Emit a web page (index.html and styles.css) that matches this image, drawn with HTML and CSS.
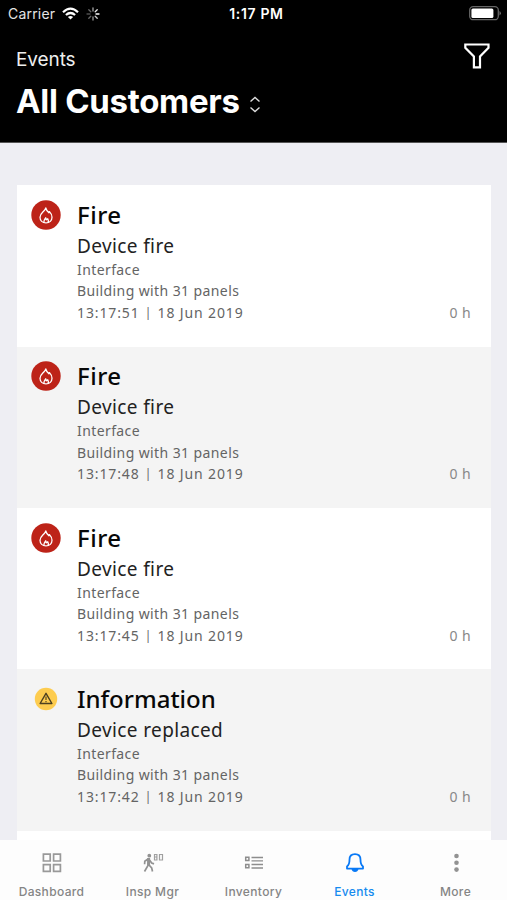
FILE: index.html
```
<!DOCTYPE html>
<html lang="en">
<head>
<meta charset="utf-8">
<title>Events</title>
<link rel="stylesheet" href="styles.css">
</head>
<body>
<svg width="0" height="0" class="defs">
  <symbol id="flame" viewBox="0 0 30 30">
    <circle cx="15" cy="15" r="14.7" fill="#bd2318"/>
    <path d="M14.800 8c.6 2.400 1.800 3.700 3.100 4.800l.6-1.200c1.700 1.800 2.500 3.700 2.500 5.600 0 3.200-2.400 5.700-6 5.700s-6-2.500-6-5.700c0-2.300 1.300-3.700 2.800-5.200C13 10.800 14.400 9.700 14.800 8zM13.200 22.500c-.8-1.700.2-3 1.500-4.700l.6 2 1.500-1c.8 1.300.8 2.500.1 3.700" fill="none" stroke="#fff" stroke-width="1.300" stroke-linejoin="round"/>
  </symbol>
</svg>
<header class="header">
  <div class="status">
    <div class="status-left">
      <span class="carrier">Carrier</span>
      <svg class="wifi" width="17" height="13" viewBox="0 0 17 13"><g fill="none" stroke="#fff" stroke-width="2.200"><path d="M1 5.200Q8.500-1.800 16 5.200"/><path d="M3.900 8Q8.500 4 13.100 8"/></g><path d="M5.900 9.900Q8.500 7.900 11.100 9.900L8.500 12.500z" fill="#fff"/></svg>
      <svg class="spinner" width="14" height="14" viewBox="0 0 14 14"><g stroke="#fff" stroke-width="1.300" stroke-linecap="round"><path d="M7 1v3" opacity=".65"/><path d="M11.200 2.800 9.200 4.800" opacity=".9"/><path d="M13 7h-3"/><path d="M11.200 11.200 9.200 9.200" opacity=".8"/><path d="M7 13v-3" opacity=".6"/><path d="M2.800 11.200 4.800 9.200" opacity=".4"/><path d="M1 7h3" opacity=".3"/><path d="M2.800 2.800 4.800 4.800" opacity=".4"/></g></svg>
    </div>
    <span class="clock">1:17 PM</span>
    <svg class="battery" width="32" height="15" viewBox="0 0 32 15"><rect x=".7" y=".7" width="28.600" height="13" rx="3.500" fill="none" stroke="#666" stroke-width="1.300"/><rect x="2.400" y="2.400" width="22" height="9.600" rx="1.500" fill="#fff"/><path d="M30.500 5v4.500q1.300-.8 1.300-2.250T30.500 5z" fill="#777"/></svg>
  </div>
  <div class="heading">
    <div>
      <div class="section">Events</div>
      <div class="customer">
        <h1>All Customers</h1>
        <svg width="12" height="17" viewBox="0 0 12 17"><path d="M1.500 5.500 6 1.500l4.500 4M1.500 11.500l4.500 4 4.500-4" fill="none" stroke="#ddd" stroke-width="1.400"/></svg>
      </div>
    </div>
    <svg class="filter" width="26" height="26" viewBox="0 0 26 26"><path d="M1.300 1.500h23.200v3.300L16 13.500v10.800H9.900V13.500L1.300 4.800z" fill="none" stroke="#fff" stroke-width="2.200"/></svg>
  </div>
</header>
<main class="list">
  <article class="event">
    <svg class="badge" width="30" height="30"><use href="#flame"/></svg>
    <div class="body">
      <h2 class="fire">Fire</h2><h3>Device fire</h3>
      <p>Interface</p><p>Building with 31 panels</p>
      <div class="meta"><time>13:17:51<i>|</i>18 Jun 2019</time><span class="age">0 h</span></div>
    </div>
  </article>
  <article class="event">
    <svg class="badge" width="30" height="30"><use href="#flame"/></svg>
    <div class="body">
      <h2 class="fire">Fire</h2><h3>Device fire</h3>
      <p>Interface</p><p>Building with 31 panels</p>
      <div class="meta"><time>13:17:48<i>|</i>18 Jun 2019</time><span class="age">0 h</span></div>
    </div>
  </article>
  <article class="event">
    <svg class="badge" width="30" height="30"><use href="#flame"/></svg>
    <div class="body">
      <h2 class="fire">Fire</h2><h3>Device fire</h3>
      <p>Interface</p><p>Building with 31 panels</p>
      <div class="meta"><time>13:17:45<i>|</i>18 Jun 2019</time><span class="age">0 h</span></div>
    </div>
  </article>
  <article class="event">
    <svg class="badge" width="30" height="30" viewBox="0 0 30 30"><circle cx="15" cy="15" r="11.200" fill="#fdcc4f"/><path d="M15 9.300 20.900 19.500H9.100z" fill="none" stroke="#4d4020" stroke-width="1.400" stroke-linejoin="round"/><path d="M15 12.600v3.400M15 17v1.200" stroke="#4d4020" stroke-width="1.100"/></svg>
    <div class="body">
      <h2>Information</h2><h3>Device replaced</h3>
      <p>Interface</p><p>Building with 31 panels</p>
      <div class="meta"><time>13:17:42<i>|</i>18 Jun 2019</time><span class="age">0 h</span></div>
    </div>
  </article>
  <div class="event"></div>
</main>
<nav class="tabs">
  <div class="tab"><svg width="24" height="24" viewBox="0 0 24 24"><path d="M3.400 3.200h6.800V10H3.400zM13.600 3.200h6.800V10h-6.800zM3.400 13.600h6.800v6.800H3.400zM13.600 13.600h6.800v6.800h-6.800z" fill="none" stroke="#999" stroke-width="1.700"/></svg><span>Dashboard</span></div>
  <div class="tab"><svg width="24" height="24" viewBox="0 0 24 24"><circle cx="8.300" cy="4.700" r="1.900" fill="#929292"/><path d="M7.800 8 7 14.500l-3.500 6M8 14l2.700 3 .8 3.500M7 8l-3.200 2.200-.2 3M8.500 9l2.200 3 2.300.9" fill="none" stroke="#929292" stroke-width="1.700"/><path d="M7.600 7v7.500" stroke="#929292" stroke-width="3"/><path d="M13.500 3.500h2.400V6h-2.400zM13.500 6h2.400v3h-2.400zM18.500 3.500h3V9h-3z" fill="none" stroke="#a0a0a0" stroke-width="1.200"/></svg><span>Insp Mgr</span></div>
  <div class="tab"><svg width="24" height="24" viewBox="0 0 24 24"><path d="M3.700 6.300h3.200v3.200H3.700zM3.700 13.500h3.200v3.200H3.700z" fill="none" stroke="#8d8d8d" stroke-width="1.500"/><path d="M9.500 6.500H21M9.500 9.900H21M9.500 13.500H21M9.500 17H21" stroke="#8d8d8d" stroke-width="1.400"/></svg><span>Inventory</span></div>
  <div class="tab active"><svg width="24" height="24" viewBox="0 0 24 24"><path d="M12 3.200c3.700 0 5.500 2.500 5.500 5.500 0 4.200.6 5.300 2.500 6.700v2.200H4v-2.200c1.900-1.400 2.500-2.500 2.500-6.700 0-3 1.800-5.500 5.500-5.500z" fill="none" stroke="#0879f6" stroke-width="1.800" stroke-linejoin="round"/><path d="M8.500 18h7c-.4 1.900-1.700 3-3.500 3s-3.100-1.100-3.500-3z" fill="#0879f6"/></svg><span>Events</span></div>
  <div class="tab"><svg width="24" height="24" viewBox="0 0 24 24" fill="#929292"><circle cx="12.500" cy="5" r="2.300"/><circle cx="12.500" cy="11.800" r="2.300"/><circle cx="12.500" cy="18.600" r="2.300"/></svg><span>More</span></div>
</nav>
</body>
</html>
```
FILE: styles.css
```
* { box-sizing: border-box; margin: 0; padding: 0; }
body { width: 507px; height: 900px; overflow: hidden; display: flex; flex-direction: column; background: #eeeef3; font-family: Inter, sans-serif; }
svg { display: block; flex: none; }
.defs { height: 0; }
.header { height: 143px; flex: none; background: #000; color: #fff; border-bottom: 1px solid #555; }
.status { display: grid; grid-template-columns: 1fr auto 1fr; align-items: center; height: 27px; padding: 0 6px 0 8px; }
.status-left { display: flex; align-items: center; }
.carrier { font-size: 14px; letter-spacing: .2px; color: #e4e4e4; }
.wifi { margin-left: 7px; }
.spinner { margin-left: 7px; }
.clock { font-size: 14px; font-weight: 600; letter-spacing: .65px; margin-left: 4px; }
.battery { justify-self: end; }
.heading { display: flex; justify-content: space-between; padding: 17px 17px 0 16px; }
.section { font-size: 19px; line-height: 32px; letter-spacing: -.1px; color: #eee; }
.customer { display: flex; align-items: center; gap: 9px; }
.customer svg { margin-top: 7px; }
h1 { font-size: 33px; line-height: 50px; font-weight: 700; letter-spacing: -.3px; }
.filter { margin-top: -1px; }
.list { flex: 1; min-height: 0; overflow: hidden; padding: 42.400px 16px 0 17px; font-family: "Noto Sans", sans-serif; }
.event { height: 161.300px; padding: 13.600px 20px 0 14px; display: flex; gap: 16px; background: #fff; }
.event:nth-child(even) { background: #f4f4f4; }
.badge { margin-top: 1px; }
.body { flex: 1; color: #646464; font-size: 14px; line-height: 21.500px; letter-spacing: .4px; }
h2 { font-size: 24px; line-height: 32px; font-weight: 500; color: #080808; letter-spacing: 0; }
.fire { letter-spacing: .5px; }
h3 { font-size: 19px; line-height: 28px; padding-top: 1px; margin-bottom: -1px; font-weight: 400; color: #222; letter-spacing: .38px; }
.meta { display: flex; justify-content: space-between; }
time { display: flex; letter-spacing: .87px; }
time i { width: 18px; text-align: center; font-style: normal; font-size: 12px; }
.age { color: #888; }
.tabs { height: 60px; flex: none; display: grid; grid-template-columns: repeat(5, 101px); background: #fdfdfd; padding: 11px 0 0 1px; }
.tab { display: flex; flex-direction: column; align-items: center; color: #858585; font-size: 12px; font-weight: 500; line-height: 16px; letter-spacing: .35px; }
.tab span { margin-top: 9px; }
.active { color: #168bef; }
```
